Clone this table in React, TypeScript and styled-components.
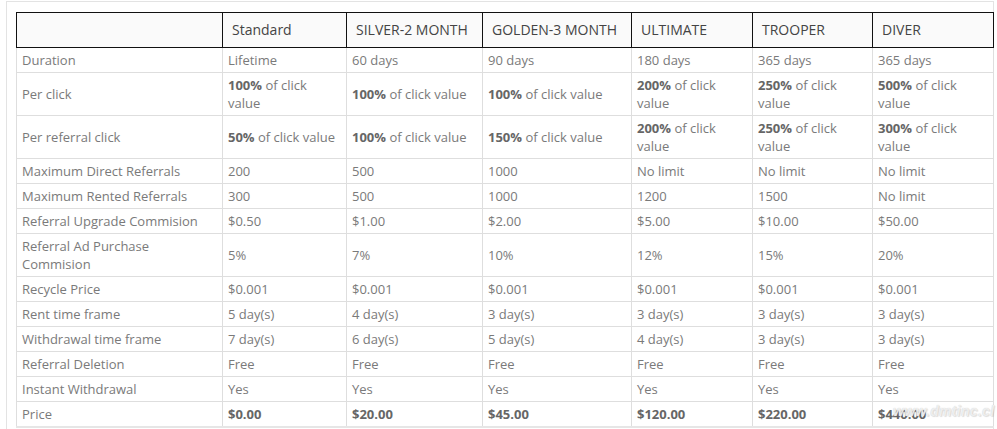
import React from "react";
import styled, { createGlobalStyle } from "styled-components";

const Global = createGlobalStyle`
  html, body { margin: 0; padding: 0; background: #fff; }
  body { font-family: "Open Sans", "Liberation Sans", sans-serif; }
`;

const Frame = styled.div`
  position: relative;
  margin: 1px 0 0 6px;
  width: 988px;
  border: 1px solid #e3e3e3;
  border-bottom: none;
  padding: 10px 0 0 9px;
  box-sizing: border-box;
  height: 440px;
`;

const Table = styled.table`
  border-collapse: collapse;
  table-layout: fixed;
  width: 977px;
  font-size: 13px;
  line-height: 18px;
  color: #7a7a7a;
  border-bottom: 2px solid #e6e6e6;
`;

const Th = styled.th`
  border: 1px solid #111;
  background: #fafafa;
  height: 34px;
  padding: 0 9px;
  text-align: left;
  font-weight: 400;
  font-size: 14px;
  color: #444;
`;

const Td = styled.td`
  border: 1px solid #dedede;
  padding: 3px 8px 3px 5px;
  vertical-align: middle;
  text-align: left;
`;

const B = styled.b`
  font-weight: 700;
  color: #666;
`;

const Watermark = styled.span`
  position: absolute;
  left: 886px;
  top: 401px;
  font-family: "Liberation Sans", sans-serif;
  font-style: italic;
  font-weight: 700;
  font-size: 14px;
  letter-spacing: 0.3px;
  color: rgba(255, 255, 255, 0.7);
  text-shadow: 0 0 1px #c4c4c4, 1px 1px 1px rgba(0, 0, 0, 0.12);
  pointer-events: none;
  white-space: nowrap;
`;

const widths = [206, 124, 136, 149, 121, 120, 121];
const headers = ["", "Standard", "SILVER-2 MONTH", "GOLDEN-3 MONTH", "ULTIMATE", "TROOPER", "DIVER"];

type Cell = string | { b: string; t?: string };
const pct = (p: string): Cell => ({ b: p, t: " of click value" });

const rows: [string, Cell[]][] = [
  ["Duration", ["Lifetime", "60 days", "90 days", "180 days", "365 days", "365 days"]],
  ["Per click", [pct("100%"), pct("100%"), pct("100%"), pct("200%"), pct("250%"), pct("500%")]],
  ["Per referral click", [pct("50%"), pct("100%"), pct("150%"), pct("200%"), pct("250%"), pct("300%")]],
  ["Maximum Direct Referrals", ["200", "500", "1000", "No limit", "No limit", "No limit"]],
  ["Maximum Rented Referrals", ["300", "500", "1000", "1200", "1500", "No limit"]],
  ["Referral Upgrade Commision", ["$0.50", "$1.00", "$2.00", "$5.00", "$10.00", "$50.00"]],
  ["Referral Ad Purchase Commision", ["5%", "7%", "10%", "12%", "15%", "20%"]],
  ["Recycle Price", ["$0.001", "$0.001", "$0.001", "$0.001", "$0.001", "$0.001"]],
  ["Rent time frame", ["5 day(s)", "4 day(s)", "3 day(s)", "3 day(s)", "3 day(s)", "3 day(s)"]],
  ["Withdrawal time frame", ["7 day(s)", "6 day(s)", "5 day(s)", "4 day(s)", "3 day(s)", "3 day(s)"]],
  ["Referral Deletion", ["Free", "Free", "Free", "Free", "Free", "Free"]],
  ["Instant Withdrawal", ["Yes", "Yes", "Yes", "Yes", "Yes", "Yes"]],
  [
    "Price",
    [{ b: "$0.00" }, { b: "$20.00" }, { b: "$45.00" }, { b: "$120.00" }, { b: "$220.00" }, { b: "$440.00" }],
  ],
];

const renderCell = (c: Cell) =>
  typeof c === "string" ? (
    c
  ) : (
    <>
      <B>{c.b}</B>
      {c.t}
    </>
  );

export default function App() {
  return (
    <>
      <Global />
      <Frame>
        <Table>
          <colgroup>
            {widths.map((w, i) => (
              <col key={i} style={{ width: w }} />
            ))}
          </colgroup>
          <thead>
            <tr>
              {headers.map((h, i) => (
                <Th key={i}>{h}</Th>
              ))}
            </tr>
          </thead>
          <tbody>
            {rows.map(([label, cells]) => (
              <tr key={label}>
                <Td>{label}</Td>
                {cells.map((c, i) => (
                  <Td key={i}>{renderCell(c)}</Td>
                ))}
              </tr>
            ))}
          </tbody>
        </Table>
        <Watermark>www.dmtinc.cl</Watermark>
      </Frame>
    </>
  );
}
